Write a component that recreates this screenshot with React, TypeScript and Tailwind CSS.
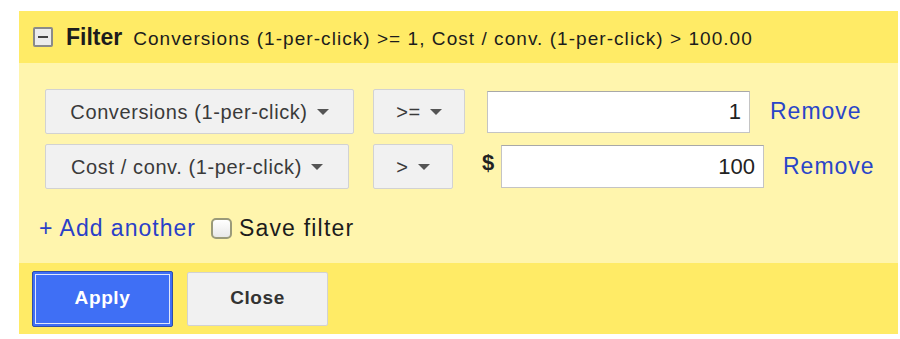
import React, { useState } from "react";

const font = { fontFamily: '"Liberation Sans", Arial, sans-serif' };

// small dark triangle used in the dropdown buttons
const Caret = () => (
  <svg width="12" height="6" viewBox="0 0 12 6" className="shrink-0">
    <path d="M0 0h12L6 6z" fill="#555" />
  </svg>
);

interface DropProps {
  label: string;
  width: string;
}

const DropButton = ({ label, width }: DropProps) => (
  <button
    className={`${width} h-[45px] flex items-center justify-center gap-[9px] bg-[#f1f1f1] border border-[#d2d2d2] rounded-[2px] text-[20px] tracking-[0.6px] text-[#3a3a3a]`}
  >
    <span>{label}</span>
    <Caret />
  </button>
);

const App = () => {
  const [saved, setSaved] = useState(false);

  return (
    <div className="w-[900px] h-[339px] bg-white pt-[11px] pl-[19px]" style={font}>
      <div className="w-[879px] flex flex-col">
        {/* Header */}
        <div className="h-[52px] bg-[#ffeb66] flex items-center pl-[14px] gap-[13px]">
          <div className="w-[20px] h-[20px] border-2 border-[#8a8a8a] bg-[#ececec] rounded-[2px] flex items-center justify-center">
            <div className="w-[10px] h-[2px] bg-[#444]" />
          </div>
          <div className="flex items-baseline gap-[11px]">
            <span className="text-[23px] font-bold text-[#1c1c1c]">Filter</span>
            <span className="text-[19px] tracking-[1.05px] text-[#1c1c1c]">
              Conversions (1-per-click) &gt;= 1, Cost / conv. (1-per-click) &gt; 100.00
            </span>
          </div>
        </div>

        {/* Body */}
        <div className="h-[200px] bg-[#fff5ad] pl-[26px] pt-[26px] flex flex-col">
          <div className="flex items-center h-[45px]">
            <DropButton label="Conversions (1-per-click)" width="w-[309px]" />
            <div className="ml-[19px]">
              <DropButton label=">=" width="w-[92px]" />
            </div>
            <div className="ml-[22px] w-[263px] h-[42px] bg-white border border-[#c4c4c4] border-t-[#a8a8a8] flex items-center justify-end pr-[8px] text-[22px] text-[#222]">
              1
            </div>
            <a className="ml-[20px] text-[23px] tracking-[1px] text-[#2a45c8]">Remove</a>
          </div>

          <div className="flex items-center h-[45px] mt-[10px]">
            <DropButton label="Cost / conv. (1-per-click)" width="w-[304px]" />
            <div className="ml-[24px]">
              <DropButton label=">" width="w-[80px]" />
            </div>
            <span className="ml-[29px] w-[19px] text-[22px] text-[#222] font-bold self-start mt-[2px]">$</span>
            <div className="w-[263px] h-[43px] bg-white border border-[#c4c4c4] border-t-[#a8a8a8] flex items-center justify-end pr-[8px] text-[22px] text-[#222]">
              100
            </div>
            <a className="ml-[19px] text-[23px] tracking-[1px] text-[#2a45c8]">Remove</a>
          </div>

          <div className="flex items-center mt-[22px] -ml-[6px]">
            <a className="text-[23px] tracking-[1px] text-[#2a3fc8]">+ Add another</a>
            <label className="flex items-center ml-[15px] gap-[7px]">
              <span
                onClick={() => setSaved(!saved)}
                className="w-[21px] h-[21px] rounded-[5px] border-2 border-[#9a9a7a] bg-gradient-to-b from-white to-[#e8e8e8]"
              />
              <span className="text-[23px] tracking-[1.2px] text-[#1c1c1c]">Save filter</span>
            </label>
          </div>
        </div>

        {/* Footer */}
        <div className="h-[71px] bg-[#ffeb66] flex items-center pl-[13px] gap-[14px]">
          <button className="w-[141px] h-[56px] border border-[#2f4ea8] rounded-[2px] p-[2px] bg-[#3f6ff5]">
            <div className="w-full h-full border border-[#dfe6fb] flex items-center justify-center text-[19px] tracking-[0.6px] font-bold text-white">
              Apply
            </div>
          </button>
          <button className="w-[141px] h-[54px] bg-[#f1f1f1] border border-[#d2d2d2] rounded-[2px] flex items-center justify-center text-[19px] tracking-[0.6px] font-bold text-[#333]">
            Close
          </button>
        </div>
      </div>
    </div>
  );
};

export default App;
